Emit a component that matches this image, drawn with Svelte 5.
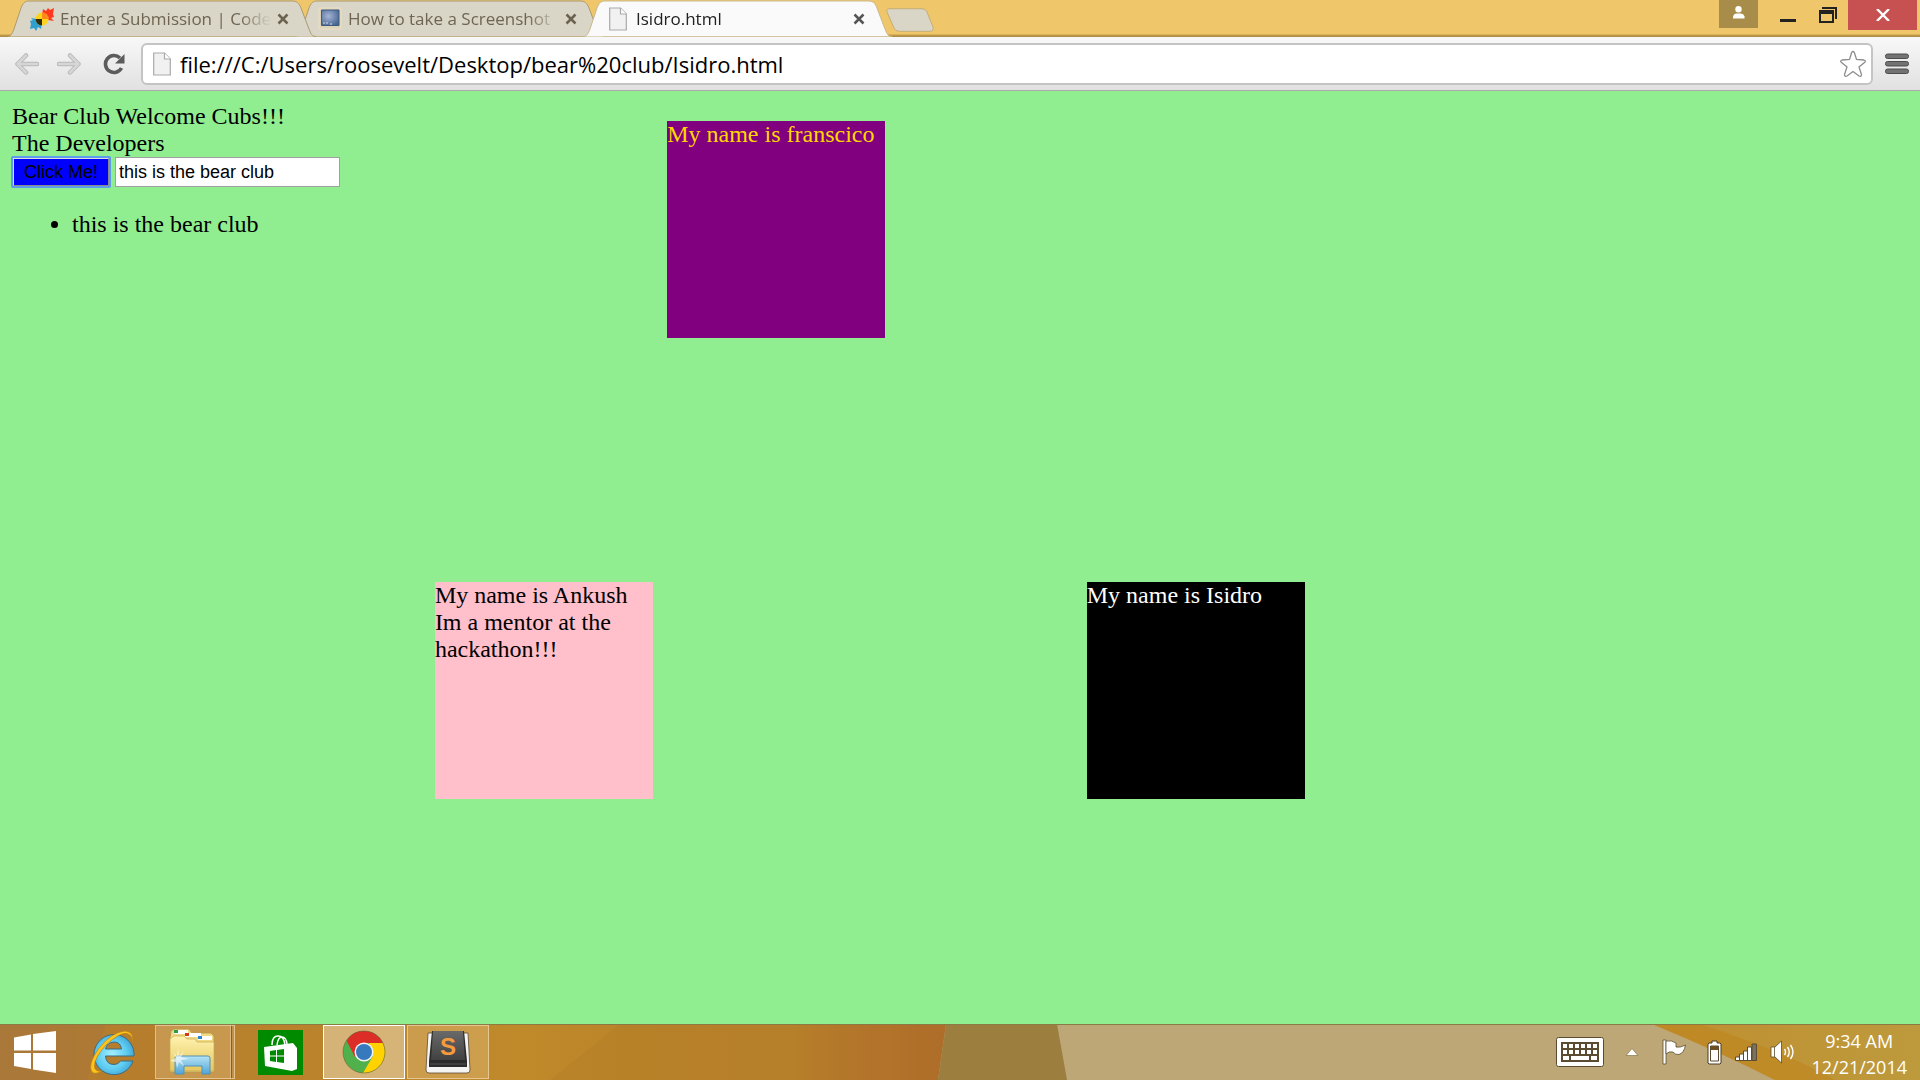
<script lang="ts">
  const tabs = [
    { id: 'submission', title: 'Enter a Submission | Code', icon: 'pinwheel', active: false },
    { id: 'howto', title: 'How to take a Screenshot', icon: 'monitor', active: false },
    { id: 'isidro', title: 'Isidro.html', icon: 'file', active: true }
  ];

  let url = $state('file:///C:/Users/roosevelt/Desktop/bear%20club/Isidro.html');
  let entry = $state('this is the bear club');
  let items = $state(['this is the bear club']);

  function addItem() {
    items.push(entry);
  }

  const keyRows = [7, 13];
  const keyCols = [0, 1, 2, 3, 4, 5];
</script>

{#snippet fileIcon()}
  <svg class="file-icon" width="18" height="24" viewBox="0 0 18 24">
    <path d="M.7 1h10.8l5.8 6v16H.7z" fill="#f1f1f1" stroke="#a9a9a9" stroke-width="1.2" />
    <path d="M11.5 1v6h5.8" fill="#fff" stroke="#a9a9a9" stroke-width="1.2" />
  </svg>
{/snippet}

<div class="desktop">
  <header class="tab-strip">
    <nav class="tabs" aria-label="Tabs">
      {#each tabs as tab (tab.id)}
        <div class="tab" class:active={tab.active}>
          <svg class="tab-shape" width="308" height="37" viewBox="0 0 308 37">
            <path d="M0 36.5C3 36 4 34 6 29L13 8C15 3 17 1 21 1H284C289 1 291 3 293 8L301 29C303 34 304 36.5 308 36.5" />
          </svg>
          <span class="favicon">
            {#if tab.icon === 'pinwheel'}
              <svg width="24" height="24" viewBox="0 0 24 24">
                <path d="M12 8l1-6 3 2 2-3 2 2 4-2-1 6 1 3-3 1 3 3-6-1z" fill="#ff3a1c" />
                <path d="M12 16l-1 6-3-2-2 4-2-3-4 1 1-5-1-3 3-1-2-2 6 1z" fill="#2f9fd0" />
                <circle cx="12" cy="12" r="6.5" fill="#fdd41c" />
                <path d="M12 12V5.5A6.5 6.5 0 0 1 18.5 12z" fill="#ff8a1c" />
                <path d="M12 12v6.5A6.5 6.5 0 0 1 5.5 12z" fill="#33290f" />
              </svg>
            {:else if tab.icon === 'monitor'}
              <svg width="24" height="24" viewBox="0 0 24 24">
                <defs>
                  <radialGradient id="screen" cx=".4" cy=".4" r=".7">
                    <stop offset="0" stop-color="#a6b4d6" />
                    <stop offset="1" stop-color="#45648f" />
                  </radialGradient>
                </defs>
                <path d="M1 1h22v21H1z" fill="#ddd4b8" stroke="#e9dfc6" />
                <path d="M3.5 3h17.5v15.5H3.5z" fill="url(#screen)" stroke="#3e5a82" />
                <path d="M5 16h2M8 16h2M12 17h2" stroke="#d5deea" />
              </svg>
            {:else}
              {@render fileIcon()}
            {/if}
          </span>
          <span class="tab-title">{tab.title}</span>
          <button class="tab-close" aria-label="Close tab">
            <svg width="12" height="12" viewBox="0 0 12 12"><path d="M1.5 1.5l9 9M10.5 1.5l-9 9" /></svg>
          </button>
        </div>
      {/each}
      <button class="new-tab" aria-label="New tab">
        <svg width="48" height="24" viewBox="0 0 48 24">
          <path d="M4 .7H36Q39.5.7 41 4L47 19Q48 23.3 44 23.3H13Q9.500 23.3 8 20L1 4Q0 .7 4 .7z" fill="#d9d5c7" stroke="#c4ad77" />
        </svg>
      </button>
    </nav>
    <div class="window-controls">
      <button class="profile" aria-label="Profile">
        <svg width="13" height="13" viewBox="0 0 13 13"><circle cx="6.5" cy="3.2" r="3.2" fill="#fff" /><path d="M1 12.5V10.5Q1.5 8 4 7.5H9Q12 8 12.5 10.5V12.5z" fill="#fff" /></svg>
      </button>
      <button class="minimize" aria-label="Minimize">
        <svg width="16" height="16" viewBox="0 0 16 16"><path d="M0 12h16v3H0z" fill="#222" /></svg>
      </button>
      <button class="restore" aria-label="Restore">
        <svg width="18" height="16" viewBox="0 0 18 16">
          <path d="M3 1h14v11" fill="none" stroke="#222" stroke-width="2" />
          <path d="M0 3h15v13H0zM2 7v7h11V7z" fill="#222" fill-rule="evenodd" />
        </svg>
      </button>
      <button class="close" aria-label="Close">
        <svg width="14" height="12" viewBox="0 0 14 12"><path d="M1 0l12 12M13 0L1 12" stroke="#fff" stroke-width="2.4" /></svg>
      </button>
    </div>
  </header>

  <div class="toolbar">
    <button aria-label="Back">
      <svg width="24" height="22" viewBox="0 0 24 22">
        <path d="M11 2.5L2.5 11l8.5 8.5M3 11h19" fill="none" stroke="#b9b9b9" stroke-width="4.5" stroke-linecap="round" stroke-linejoin="round" />
        <path d="M11 2.5L2.5 11l8.5 8.5M3 11h19" fill="none" stroke="#d6d6d6" stroke-width="2.5" stroke-linecap="round" stroke-linejoin="round" />
      </svg>
    </button>
    <button aria-label="Forward">
      <svg width="24" height="22" viewBox="0 0 24 22">
        <path d="M13 2.5l8.5 8.5-8.5 8.5M21 11H2" fill="none" stroke="#b9b9b9" stroke-width="4.5" stroke-linecap="round" stroke-linejoin="round" />
        <path d="M13 2.5l8.5 8.5-8.5 8.5M21 11H2" fill="none" stroke="#d6d6d6" stroke-width="2.5" stroke-linecap="round" stroke-linejoin="round" />
      </svg>
    </button>
    <button class="reload" aria-label="Reload">
      <svg width="22" height="22" viewBox="0 0 22 22">
        <path d="M18.5 15A8.5 8.5 0 1 1 17 5" fill="none" stroke="#5c5c5c" stroke-width="3.6" />
        <path d="M21.5 1v9.5H12z" fill="#5c5c5c" />
      </svg>
    </button>
    <div class="omnibox">
      {@render fileIcon()}
      <input type="text" aria-label="Address" bind:value={url} spellcheck="false" />
      <button aria-label="Bookmark this page">
        <svg width="28" height="28" viewBox="0 0 28 28">
          <path d="M14 1.5Q15 1.5 15.5 3L17.5 9.5 25 10Q27.5 10.8 25.5 12.5L20 17 22.5 24.5Q22.5 27 20 26L14 21.5 8 26Q5.5 27 5.5 24.5L8 17 2.5 12.5Q.5 10.8 3 10L10.5 9.5 12.5 3Q13 1.5 14 1.5z" fill="#fff" stroke="#8c8c8c" stroke-width="1.3" />
        </svg>
      </button>
    </div>
    <button class="menu" aria-label="Menu">
      <svg width="24" height="22" viewBox="0 0 24 22">
        {#each [1, 8.5, 16] as y}
          <rect x=".5" {y} width="23" height="4.5" rx="2" fill="#737373" stroke="#4d4d4d" />
        {/each}
      </svg>
    </button>
  </div>

  <main class="page">
    <div class="row">
      <section class="intro">
        <div>Bear Club Welcome Cubs!!!</div>
        <div>The Developers</div>
        <div class="form">
          <button class="click-me" onclick={addItem}>Click Me!</button>
          <input type="text" aria-label="New item" bind:value={entry} />
        </div>
        <ul>
          {#each items as item}
            <li>{item}</li>
          {/each}
        </ul>
      </section>
      <div class="box francisco">My name is franscico</div>
    </div>
    <div class="row mentors">
      <div class="box ankush">My name is Ankush Im a mentor at the hackathon!!!</div>
      <div class="box isidro">My name is Isidro</div>
    </div>
  </main>

  <footer class="taskbar">
    <svg class="wallpaper" viewBox="0 0 1920 56" preserveAspectRatio="none">
      <defs>
        <linearGradient id="amber">
          <stop offset="0" stop-color="#ab7a3a" />
          <stop offset=".12" stop-color="#b57d2c" />
          <stop offset=".55" stop-color="#c0892a" />
          <stop offset=".66" stop-color="#bb8529" />
          <stop offset=".84" stop-color="#ba822a" />
          <stop offset=".9" stop-color="#b6772b" />
          <stop offset="1" stop-color="#b06c2a" />
        </linearGradient>
        <linearGradient id="gold">
          <stop offset="0" stop-color="#c08e30" />
          <stop offset="1" stop-color="#bd9a3c" />
        </linearGradient>
      </defs>
      <path d="M0 0H1920V56H0z" fill="#bea777" />
      <path d="M0 0H946L938 56H0z" fill="url(#amber)" />
      <path d="M0 0H106L87 56H0z" fill="#a8753a" opacity=".5" />
      <path d="M620 0H946L938 56H550z" fill="#a8752a" opacity=".2" />
      <path d="M946 0H1057L1067 56H938z" fill="#9c7f3f" />
      <path d="M1652 0H1920V56H1775Q1720 28 1652 0z" fill="url(#gold)" />
      <path d="M1652 0H1700Q1790 30 1835 56H1775Q1720 28 1652 0z" fill="#be861e" opacity=".6" />
      <path d="M0 0H1920V1H0z" fill="#8a7a44" />
    </svg>

    <nav class="apps" aria-label="Taskbar">
      <button class="app start" aria-label="Start">
        <svg width="44" height="44" viewBox="0 0 44 44">
          <path d="M1 7.5L18 4.5V20.5H1zM20 4L43 1V20.5H20zM1 23H18V39L1 36zM20 23H43V43L20 39.5z" fill="#fff" />
        </svg>
      </button>
      <button class="app" aria-label="Internet Explorer">
        <svg width="46" height="46" viewBox="0 0 46 46">
          <defs>
            <radialGradient id="ie" cx=".45" cy=".5" r=".6">
              <stop offset="0" stop-color="#a4efff" />
              <stop offset=".6" stop-color="#5fcdf2" />
              <stop offset="1" stop-color="#3c9fd0" />
            </radialGradient>
          </defs>
          <path d="M45 27H16.500Q17 35.500 25 35.500Q29.500 35.500 31.500 32H44A20 20 0 1 1 45 27zM16.500 20H32.500Q31.500 13 25 13Q18 13.500 16.500 20z" fill="url(#ie)" stroke="#3a6c86" stroke-width="1" fill-rule="evenodd" />
          <path d="M43 14Q46 3 36 2Q23 3 10 19Q-2 36 3 43Q6 46 13 42Q6 43 5.500 38Q5 29 17 16Q31 3 38 4.500Q44 6 43 14z" fill="#ffc31c" stroke="#b78214" stroke-width=".7" />
        </svg>
      </button>
      <button class="app open stacked" aria-label="File Explorer">
        <svg width="48" height="48" viewBox="0 0 48 48">
          <defs>
            <linearGradient id="folder" y2="1" x2="0">
              <stop offset="0" stop-color="#fff3b0" />
              <stop offset="1" stop-color="#e6c75e" />
            </linearGradient>
            <linearGradient id="stand" y2="1" x2="0">
              <stop offset="0" stop-color="#b6e3f5" />
              <stop offset="1" stop-color="#4fa5d8" />
            </linearGradient>
          </defs>
          <path d="M3 3l3-2h15l3 4h19l3 3v36H2V10z" fill="#f1d982" stroke="#b99b4c" />
          <path d="M6 2h14v4H6zM17 5h16v4H17zM30 8h14v4H30z" fill="#fff" />
          <path d="M6 2h4v3H6z" fill="#2f9a47" />
          <path d="M17 5h4v3h-4z" fill="#cf3a1c" />
          <path d="M30 8h4v3h-4z" fill="#2586cd" />
          <path d="M2 11L6 8H16L19 11H27L29 14H46V43H2z" fill="url(#folder)" stroke="#c9ab55" stroke-width=".7" />
          <path d="M7 30Q7 28 9 28H40Q42 28 42 30V46H34V38H16V46H7z" fill="url(#stand)" stroke="#5291b5" />
          <path d="M10 20l1 8 5-5-3 6 8 2-8 1 3 6-5-4-2 6-1-6-6-1 6-3-3-6 4 4z" fill="#fff" opacity=".6" />
        </svg>
      </button>
      <button class="app" aria-label="Store">
        <svg width="45" height="45" viewBox="0 0 45 45">
          <path d="M0 0h45v45H0z" fill="#008a00" />
          <path d="M14 15Q14 6 20 6T27 15M19 15Q20 7 24 7T29 14" fill="none" stroke="#fff" stroke-width="1.5" />
          <path d="M6 17L35 13L39 18V39L34 41L7 36z" fill="#fff" />
          <path d="M12 21L18 20V25.5H12zM19 20L26 19V25.5H19zM12 26.5H18V32L12 31zM19 26.5H26V33L19 32z" fill="#008a00" />
        </svg>
      </button>
      <button class="app open focused" aria-label="Google Chrome">
        <svg width="44" height="44" viewBox="0 0 44 44">
          <circle cx="22" cy="22" r="21" fill="#50b04b" />
          <path d="M4.500 10.5A21 21 0 0 1 41 13H22L13 27z" fill="#dc2d27" />
          <path d="M41 13A21 21 0 0 1 21 43L31 26L27 13z" fill="#ffd200" />
          <circle cx="22" cy="22" r="9.5" fill="#f4f4f4" />
          <circle cx="22" cy="22" r="8" fill="#3679bd" />
          <circle cx="22" cy="22" r="21" fill="none" stroke="#6c6334" stroke-width=".6" />
        </svg>
      </button>
      <button class="app open" aria-label="Sublime Text">
        <svg width="46" height="44" viewBox="0 0 46 44">
          <defs>
            <linearGradient id="key" y2="1" x2="0">
              <stop offset="0" stop-color="#6a6a6a" />
              <stop offset="1" stop-color="#414141" />
            </linearGradient>
          </defs>
          <path d="M3 3H43L45 40Q45 43 42 43H4Q1 43 1 40z" fill="#f4f4f2" stroke="#5d4a31" stroke-width=".8" />
          <path d="M7 1H39L42 31V37H4V31z" fill="#2b2b2b" />
          <path d="M8 1H38L40 30H6z" fill="url(#key)" />
          <path d="M5 34H41" stroke="#555" />
          <text x="23" y="25" text-anchor="middle" class="sublime-s">S</text>
        </svg>
      </button>
    </nav>

    <div class="tray">
      <button class="keyboard" aria-label="Touch keyboard">
        <svg width="48" height="30" viewBox="0 0 48 30">
          <rect x=".5" y=".5" width="47" height="29" rx="2" fill="#fff" stroke="#5b4c31" />
          <path d="M5 5H43V25H5z" fill="#5b4c31" />
          {#each keyRows as rowY}
            {#each keyCols as col}
              <rect x={7 + col * 6} y={rowY} width="4" height="4" fill="#fff" />
            {/each}
          {/each}
          <path d="M7 19h6v4H7zM15 19h18v4H15zM35 19h6v4h-6z" fill="#fff" />
        </svg>
      </button>
      <button class="chevron" aria-label="Show hidden icons">
        <svg width="14" height="8" viewBox="0 0 14 8"><path d="M7 .5L13 7.5H1z" fill="#fff" stroke="#8a764c" stroke-width=".7" /></svg>
      </button>
      <button class="flag" aria-label="Action center">
        <svg width="25" height="26" viewBox="0 0 25 26">
          <path d="M1 1h3v24H1z" fill="#fff" stroke="#5b4c31" stroke-width=".8" />
          <path d="M4 2Q10 1 14 4V8Q18 9 23.5 6Q22 14 17 15.5Q13 16 11 13Q7 12 4 15z" fill="#fff" stroke="#5b4c31" stroke-width=".8" />
        </svg>
      </button>
      <button class="battery" aria-label="Battery">
        <svg width="15" height="25" viewBox="0 0 15 25">
          <path d="M5 1h5v2h3l1 1v19l-1 1H2l-1-1V4l1-1h3z" fill="#fff" stroke="#4b3c24" />
          <path d="M3.5 6h8v15h-8z" fill="#fff" stroke="#5b4c31" />
          <path d="M4 6h7v4H4z" fill="#6d4f22" />
        </svg>
      </button>
      <button class="signal" aria-label="Network">
        <svg width="22" height="18" viewBox="0 0 22 18">
          <path d="M.5 14h4v3.5h-4zM4.500 11h4v6.5h-4zM8.500 8h4v9.5h-4zM12.500 4h4v13.5h-4z" fill="#fff" stroke="#5b4c31" />
          <path d="M17 1h4.500v16.5H17z" fill="#7a715f" stroke="#5b4c31" />
        </svg>
      </button>
      <button class="speaker" aria-label="Volume">
        <svg width="25" height="24" viewBox="0 0 25 24">
          <path d="M1 7H5L11.5 1V23L5 17H1z" fill="#fff" stroke="#5b4c31" stroke-width=".8" />
          <path d="M4.500 7v10" stroke="#5b4c31" stroke-width=".8" />
          <path d="M14.5 9Q16.5 12 14.5 15M17.5 7Q21 12 17.5 17M20.5 5Q25.5 12 20.5 19" fill="none" stroke="#fff" stroke-width="1.4" />
        </svg>
      </button>
      <button class="clock">
        <span>9:34 AM</span>
        <span>12/21/2014</span>
      </button>
    </div>
  </footer>
</div>

<style>
  :global(body) {
    margin: 0;
    background: #90ee90;
  }

  button {
    padding: 0;
    border: none;
    background: none;
    display: flex;
    align-items: center;
    justify-content: center;
    flex-shrink: 0;
  }

  svg {
    display: block;
    flex-shrink: 0;
  }

  .desktop {
    display: flex;
    flex-direction: column;
    min-height: 100vh;
    font-family: 'Open Sans', 'Noto Sans', sans-serif;
  }

  /* Tab strip */
  .tab-strip {
    display: flex;
    justify-content: space-between;
    height: 37px;
    background: linear-gradient(#efc76a 34px, #c29c48 35px, #a88a48);
  }

  .tabs {
    display: flex;
    padding-left: 8px;
  }

  .tab {
    position: relative;
    z-index: 1;
    display: flex;
    align-items: center;
    box-sizing: border-box;
    width: 308px;
    margin-right: -20px;
    padding: 0 27px 0 22px;
    gap: 6px;
  }

  .tab:first-child { z-index: 2; }
  .tab.active { z-index: 3; }

  /* Trapezoid drawn behind the tab content */
  .tab-shape {
    position: absolute;
    inset: 0;
    z-index: -1;
    fill: #d9d5c7;
    stroke: #ab9a72;
  }

  .tab.active .tab-shape {
    fill: #fafafa;
    stroke: #c9b98e;
  }

  .favicon {
    width: 24px;
    display: flex;
    justify-content: center;
  }

  .tab-title {
    flex: 1;
    overflow: hidden;
    white-space: nowrap;
    font-size: 17px;
    line-height: 36px;
    color: #6f6552;
    mask-image: linear-gradient(90deg, #000 85%, transparent);
  }

  .tab.active .tab-title { color: #222; }

  .tab-close path {
    stroke: #6c6250;
    stroke-width: 2.5;
  }

  .tab.active .tab-close path { stroke: #555; }

  .new-tab {
    align-self: flex-start;
    padding: 8px 0 0 14px;
  }

  .window-controls {
    display: flex;
    align-items: flex-start;
    padding-right: 3px;
  }

  .profile {
    width: 39px;
    height: 28px;
    padding-bottom: 4px;
    background: #a88d4a;
  }

  .minimize,
  .restore {
    width: 40px;
    height: 30px;
  }

  .minimize { margin-left: 10px; }

  .close {
    width: 69px;
    height: 30px;
    background: #c75050;
  }

  /* Toolbar */
  .toolbar {
    display: flex;
    align-items: center;
    gap: 18px;
    height: 53px;
    padding: 0 11px 0 15px;
    background: linear-gradient(#f8f8f8, #e1e1e1);
    border-bottom: 1px solid #ababab;
  }

  .reload { margin-left: 4px; }

  .omnibox {
    flex: 1;
    display: flex;
    align-items: center;
    gap: 9px;
    height: 38px;
    margin-left: -2px;
    padding: 0 4px 0 10px;
    background: #fff;
    border: 2px solid #c4c4c4;
    border-radius: 6px;
  }

  .omnibox input {
    flex: 1;
    min-width: 0;
    padding: 0;
    border: none;
    outline: none;
    background: none;
    font-family: inherit;
    font-size: 22px;
    color: #000;
  }

  .menu { margin-left: -6px; }

  /* Document */
  .page {
    flex: 1;
    background: #90ee90;
    color: #000;
    font-family: 'Liberation Serif', 'Times New Roman', serif;
    font-size: 24px;
    line-height: 27px;
  }

  .row {
    display: flex;
    align-items: flex-start;
  }

  .intro {
    flex: 0 0 34.75%;
    box-sizing: border-box;
    padding: 12px;
  }

  .form {
    display: flex;
    align-items: center;
    gap: 5px;
  }

  .click-me {
    height: 30px;
    padding: 0 10px;
    background: #00f;
    border: 2px outset #ddd;
    outline: 2px solid #5b9bf0;
    outline-offset: -1px;
    border-radius: 1px;
    font-family: 'Liberation Sans', Arial, sans-serif;
    font-size: 18px;
    color: #000;
  }

  .form input {
    box-sizing: border-box;
    width: 225px;
    height: 30px;
    padding: 0 3px;
    border: 1px solid #a0a0a0;
    background: #fff;
    font-family: 'Liberation Sans', Arial, sans-serif;
    font-size: 18px;
    color: #000;
  }

  ul {
    margin: 24px 0 0;
    padding-left: 60px;
  }

  .box {
    width: 218px;
    height: 217px;
    flex-shrink: 0;
  }

  .francisco {
    margin-top: 30px;
    background: purple;
    color: gold;
  }

  .mentors {
    margin-top: 244px;
    padding-left: 22.65%;
    gap: 22.6vw;
  }

  .ankush { background: pink; }

  .isidro {
    background: #000;
    color: #fff;
  }

  /* Taskbar */
  .taskbar {
    position: relative;
    z-index: 0;
    display: flex;
    justify-content: space-between;
    height: 56px;
  }

  .wallpaper {
    position: absolute;
    inset: 0;
    z-index: -1;
    width: 100%;
    height: 100%;
  }

  .apps {
    display: flex;
    align-items: center;
    gap: 2px;
  }

  .app {
    box-sizing: border-box;
    width: 82px;
    height: 54px;
  }

  .start { width: 69px; }

  .open {
    background: rgba(255, 235, 200, 0.22);
    border: 1px solid rgba(255, 240, 215, 0.5);
  }

  .focused {
    background: rgba(240, 225, 195, 0.5);
    border: 1px solid #fff;
  }

  /* Second window peeking out behind the first */
  .stacked {
    padding-right: 6px;
    width: 80px;
    margin-right: 2px;
    background: linear-gradient(90deg, rgba(255, 235, 200, 0.22) 74px, rgba(255, 240, 215, 0.5) 74px 75px, rgba(90, 60, 20, 0.5) 75px 76px, rgba(255, 235, 200, 0.15) 76px);
  }

  .sublime-s {
    font: bold 24px 'Liberation Sans', Arial, sans-serif;
    fill: #f79a3c;
  }

  .tray {
    display: flex;
    align-items: center;
    padding-right: 13px;
  }

  .chevron { margin: 0 23px 0 21px; }
  .flag { margin-right: 20px; }
  .battery { margin-right: 13px; }
  .signal { margin-right: 13px; }
  .speaker { margin-right: 16px; }

  .clock {
    flex-direction: column;
    padding-top: 4px;
    font-family: inherit;
    font-size: 18px;
    line-height: 26px;
    color: #fff;
  }
</style>
